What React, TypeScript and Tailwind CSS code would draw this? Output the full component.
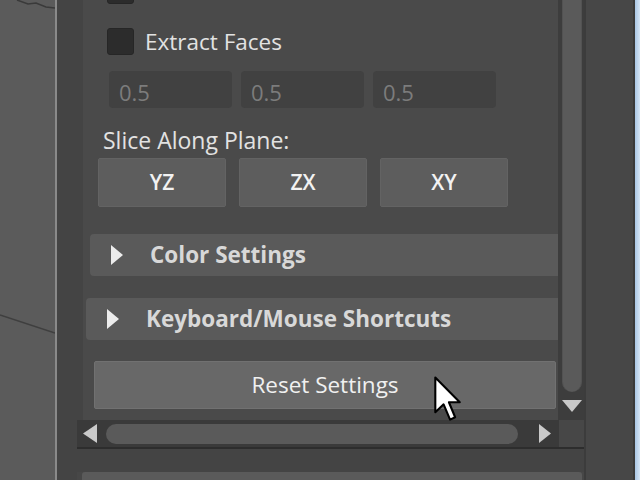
import type { ReactNode } from 'react'

function Checkbox() {
  return <div className="h-[27px] w-[27px] shrink-0 rounded-[3px] border border-[#262626] bg-[#2c2c2c]" />
}

function NumField({ value }: { value: string }) {
  return (
    <div className="flex h-[37px] w-[123px] items-center rounded-[4px] bg-[#414141] pl-[10px] pt-[4px] text-[22px] leading-[30px] text-[#7c7c7c]">
      {value}
    </div>
  )
}

function PlaneButton({ children }: { children: ReactNode }) {
  return (
    <div className="flex h-[49px] w-[128px] items-center justify-center rounded-[2px] border border-[#636363] bg-[#5d5d5d] text-[21px] font-semibold text-[#f2f2f2]">
      {children}
    </div>
  )
}

function FrameHeader({ label, indent }: { label: string; indent: string }) {
  return (
    <div className={`flex h-[42px] items-center rounded-l-[4px] bg-[#5a5a5a] pl-[20px] ${indent}`}>
      <svg width="14" height="22" viewBox="0 0 14 22" className="mr-[26px] shrink-0">
        <path d="M1 1 L13 11 L1 21 Z" fill="#ececec" />
      </svg>
      <span className="text-[22.5px] font-bold leading-[30px] text-[#d8d8d8]">{label}</span>
    </div>
  )
}

export default function App() {
  return (
    <div className="relative flex h-[480px] w-[640px] overflow-hidden bg-[#474747] font-['Open_Sans',sans-serif]">
      {/* viewport edge */}
      <div className="relative w-[55px] shrink-0 bg-[#5b5b5b]">
        <svg className="absolute inset-0" width="55" height="480">
          <path d="M17 0 L28 4 L36 3 L46 7 L55 8" stroke="#3a3a3a" strokeWidth="1.5" fill="none" />
          <path d="M0 315 L55 333" stroke="#3f3f3f" strokeWidth="1.5" fill="none" />
        </svg>
      </div>
      <div className="w-[2px] shrink-0 bg-[#8a8a8a]" />
      <div className="w-[20px] shrink-0 bg-[#444444]" />

      <div className="flex w-[507px] shrink-0 flex-col">
        <div className="flex h-[420px]">
          <div className="w-[6px] bg-[#444444]" />
          <div className="flex flex-1 flex-col overflow-hidden bg-[#4a4a4a]">
            <div className="ml-[24px] mt-[-23px]">
              <Checkbox />
            </div>
            <div className="ml-[24px] mt-[24px] flex h-[27px] items-center gap-[11px]">
              <Checkbox />
              <span className="text-[22.5px] font-medium leading-[27px] text-[#e2e2e2]">Extract Faces</span>
            </div>
            <div className="ml-[26px] mt-[16px] flex gap-[9px]">
              <NumField value="0.5" />
              <NumField value="0.5" />
              <NumField value="0.5" />
            </div>
            <div className="ml-[20px] mt-[17px] h-[30px] text-[23px] font-medium leading-[30px] text-[#e2e2e2]">
              Slice Along Plane:
            </div>
            <div className="ml-[15px] mt-[3px] flex gap-[13px]">
              <PlaneButton>YZ</PlaneButton>
              <PlaneButton>ZX</PlaneButton>
              <PlaneButton>XY</PlaneButton>
            </div>
            <div className="mt-[27px] flex flex-col gap-[22px]">
              <FrameHeader label="Color Settings" indent="ml-[7px]" />
              <FrameHeader label="Keyboard/Mouse Shortcuts" indent="ml-[3px]" />
            </div>
            <div className="ml-[11px] mr-[2px] mt-[21px] flex h-[48px] items-center justify-center rounded-[2px] border border-[#717171] bg-[#686868] text-[22.5px] font-medium leading-[30px] text-[#f0f0f0]">
              Reset Settings
            </div>
          </div>
          {/* vertical scrollbar */}
          <div className="flex w-[26px] flex-col bg-[#3d3d3d] pl-[4px] pr-[2px]">
            <div className="flex-1 rounded-b-[10px] border-x border-[#525252] bg-[#5a5a5a]" />
            <div className="flex h-[28px] items-start justify-center pt-[8px]">
              <svg width="20" height="12" viewBox="0 0 20 12">
                <path d="M0 0 L20 0 L10 12 Z" fill="#c9c9c9" />
              </svg>
            </div>
          </div>
        </div>
        {/* horizontal scrollbar */}
        <div className="flex h-[27px]">
          <div className="flex w-[482px] items-center bg-[#3a3a3a] pl-[6px]">
            <svg width="14" height="19" viewBox="0 0 14 19" className="shrink-0">
              <path d="M14 0 L14 19 L0 9.5 Z" fill="#cacaca" />
            </svg>
            <div className="ml-[9px] h-[20px] w-[412px] rounded-full bg-[#5a5a5a]" />
            <svg width="12" height="19" viewBox="0 0 12 19" className="ml-[21px] shrink-0">
              <path d="M0 0 L12 9.5 L0 19 Z" fill="#cacaca" />
            </svg>
          </div>
          <div className="flex-1 bg-[#474747]" />
        </div>
        <div className="h-[2px] bg-[#2d2d2d]" />
        <div className="h-[23px] bg-[#444444]" />
        <div className="ml-[5px] mr-[2px] flex-1 rounded-t-[3px] bg-[#5a5a5a]" />
      </div>

      <div className="flex-1 border-l-2 border-[#3c3c3c] bg-[#474747]" />
      <div className="w-[2px] shrink-0 bg-[#3a3a3a]" />
      <div className="w-[5px] shrink-0 bg-gradient-to-r from-[#a9c7e6] to-[#d6e6f6]" />

      {/* mouse pointer */}
      <svg className="absolute left-[433px] top-[375px]" width="30" height="49" viewBox="0 0 13 21">
        <path
          d="M1 1 L1 16 L4.6 12.6 L7.4 19.2 L9.6 18.2 L6.9 11.7 L11.6 11.7 Z"
          fill="#ffffff"
          stroke="#000000"
          strokeWidth="0.9"
          strokeLinejoin="round"
        />
      </svg>
    </div>
  )
}
